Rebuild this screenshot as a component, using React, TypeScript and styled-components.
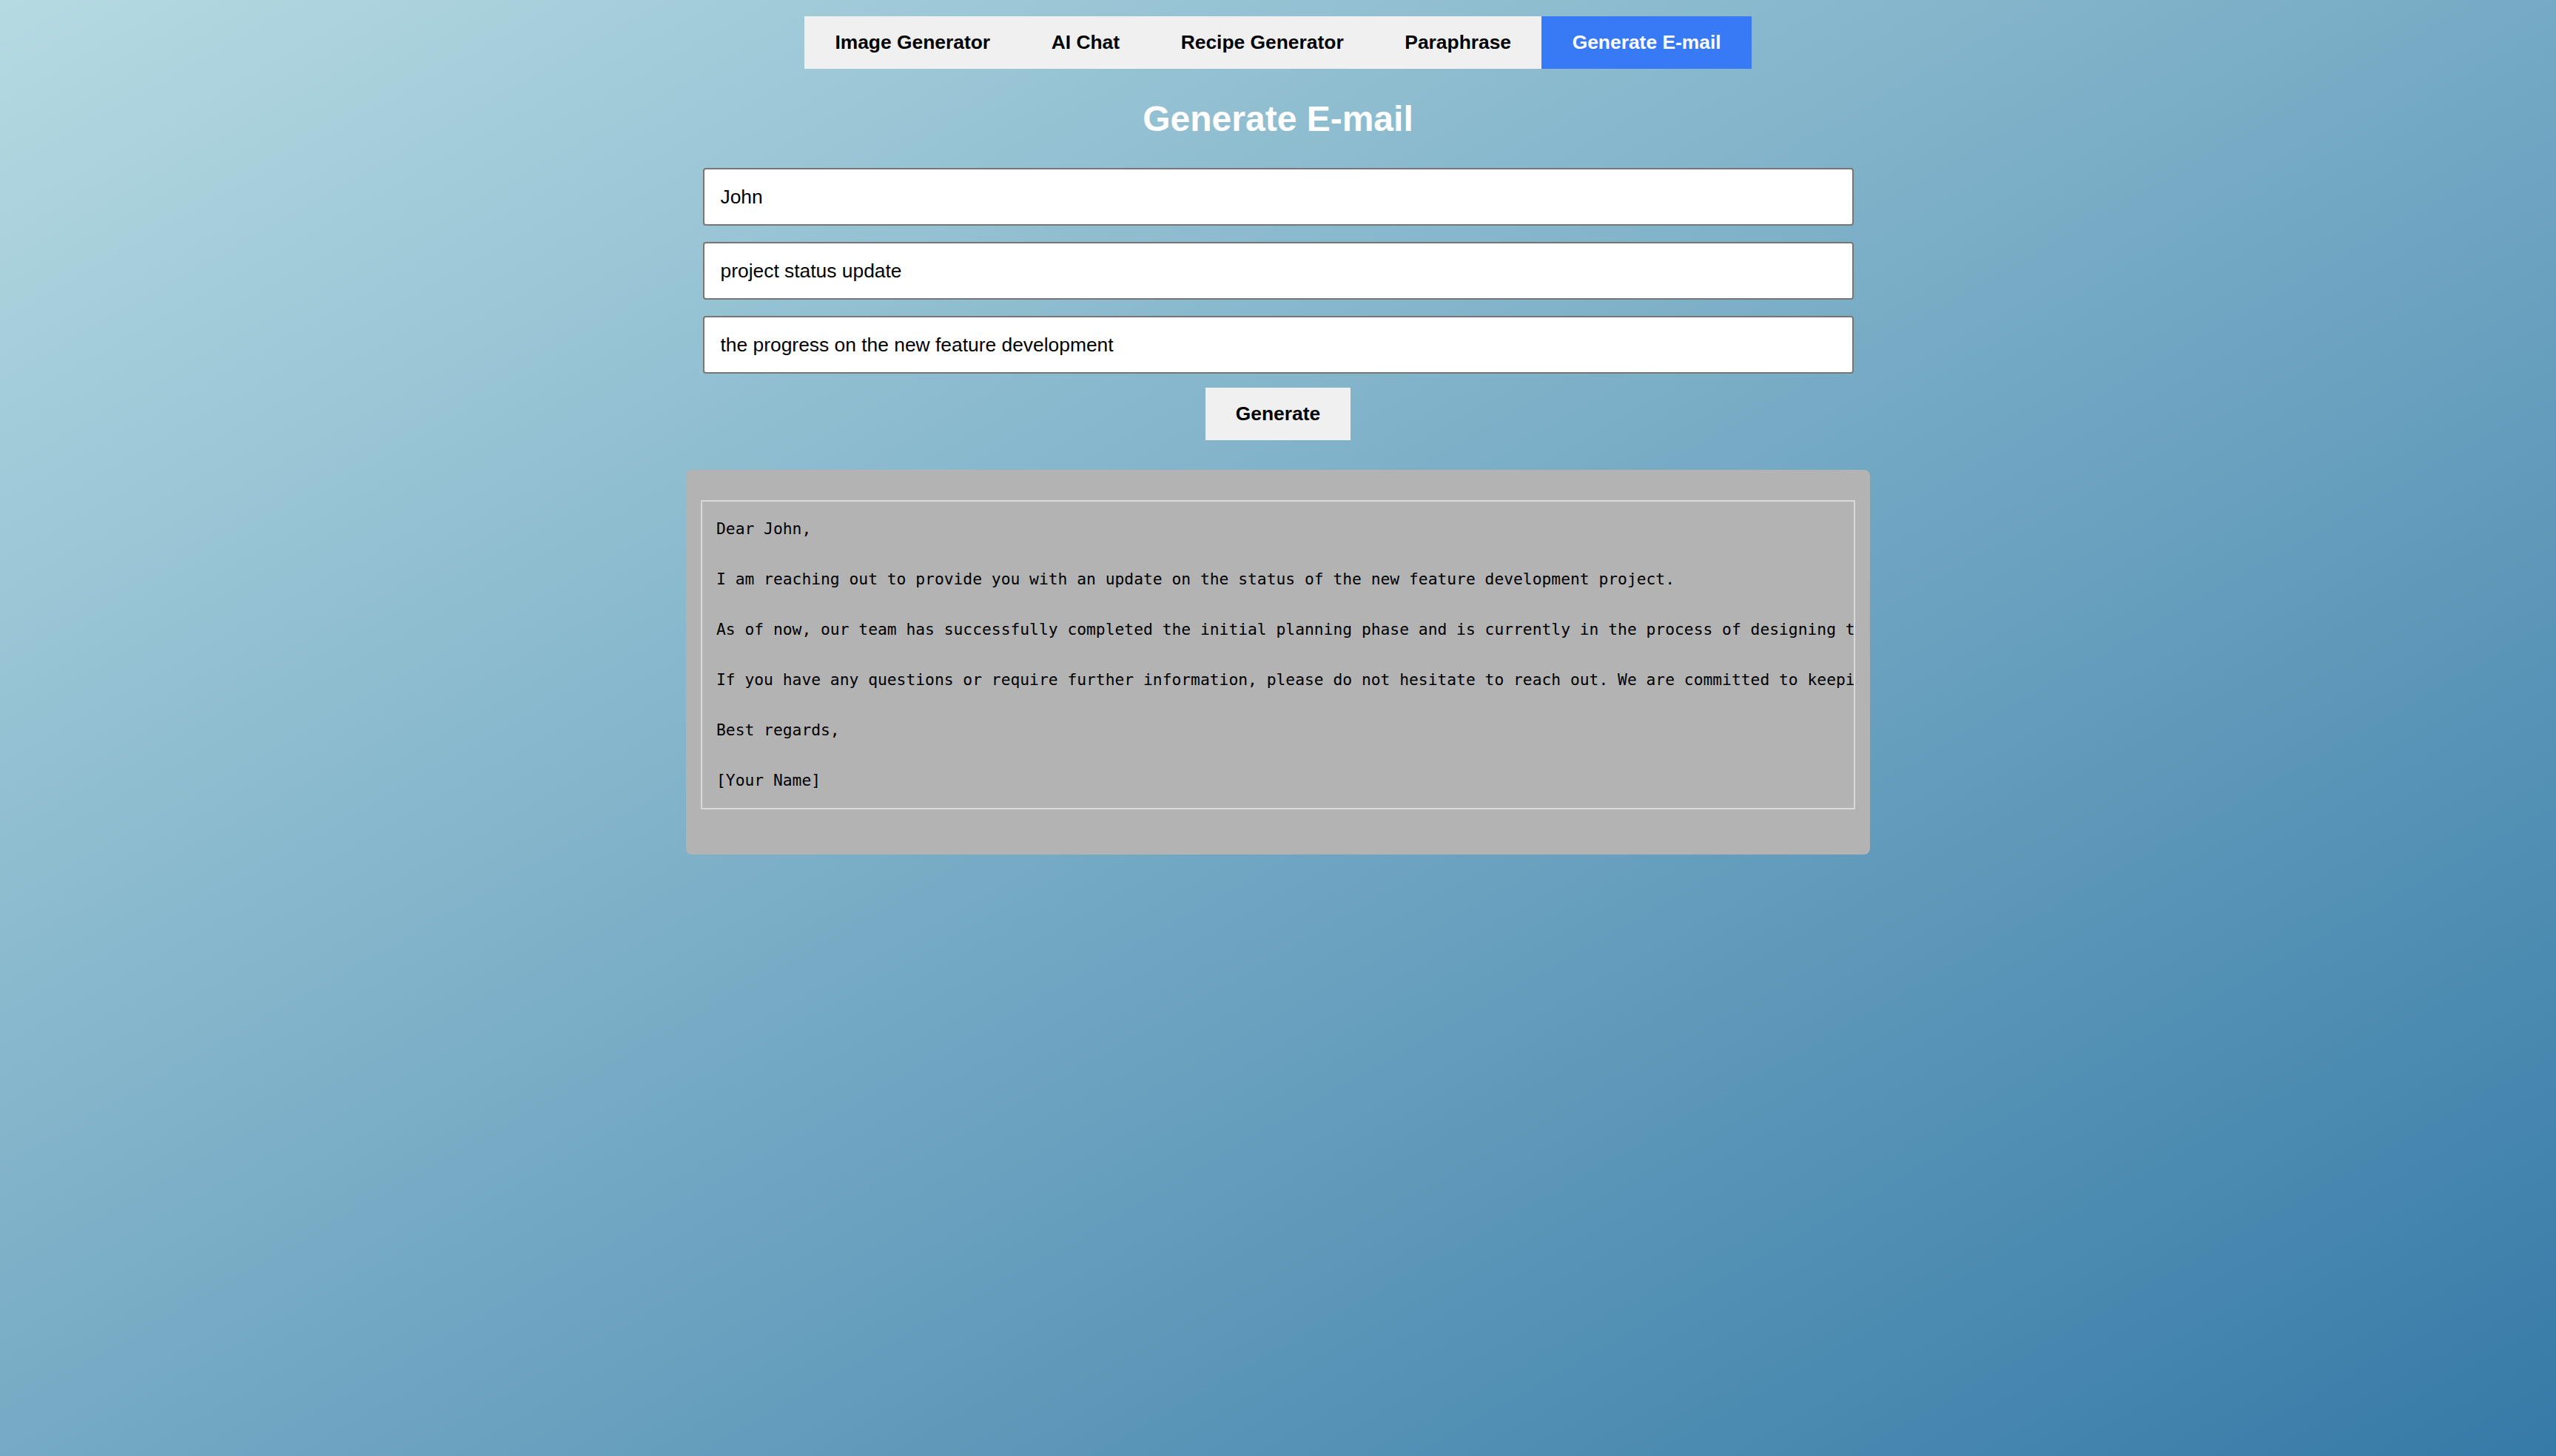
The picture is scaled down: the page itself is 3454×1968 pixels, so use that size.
import React from "react";
import styled, { createGlobalStyle } from "styled-components";

const GlobalStyle = createGlobalStyle`
  html, body {
    margin: 0;
    padding: 0;
  }
  body {
    font-family: "Liberation Sans", Arial, sans-serif;
  }
  * {
    box-sizing: border-box;
  }
`;

const Page = styled.div`
  min-height: 100vh;
  display: flex;
  flex-direction: column;
  align-items: center;
  padding-top: 22px;
  background: linear-gradient(to bottom right, #b5dae2, #367aa7);
`;

const Nav = styled.nav`
  display: flex;
  background: #f0f0f0;
`;

const NavItem = styled.button<{ $active?: boolean }>`
  height: 71px;
  padding: 0 41.3px;
  border: none;
  margin: 0;
  display: flex;
  align-items: center;
  font-family: "Liberation Sans", Arial, sans-serif;
  font-size: 26.4px;
  font-weight: 700;
  color: ${(p) => (p.$active ? "#ffffff" : "#000000")};
  background: ${(p) => (p.$active ? "#387af6" : "#f0f0f0")};
  cursor: pointer;
`;

const Title = styled.h1`
  margin: 40px 0 39px;
  font-size: 48px;
  line-height: 55px;
  font-weight: 700;
  color: #ffffff;
  text-align: center;
`;

const Form = styled.div`
  width: 1555px;
  display: flex;
  flex-direction: column;
  gap: 22px;
`;

const TextInput = styled.input`
  width: 100%;
  height: 78px;
  padding: 0 22px;
  border: 2px solid #767676;
  border-radius: 4px;
  background: #ffffff;
  font-family: "Liberation Sans", Arial, sans-serif;
  font-size: 26.4px;
  color: #000000;
  outline: none;
`;

const GenerateButton = styled.button`
  margin-top: 19px;
  height: 71px;
  padding: 0 41px;
  border: none;
  background: #f0f0f0;
  font-family: "Liberation Sans", Arial, sans-serif;
  font-size: 26.4px;
  font-weight: 700;
  color: #000000;
  cursor: pointer;
`;

const OutputCard = styled.section`
  margin-top: 40px;
  width: 1600px;
  padding: 41px 20px 61px;
  background: #b3b3b3;
  border-radius: 8px;
`;

const EmailText = styled.pre`
  margin: 0;
  padding: 20px 19px;
  border: 2px solid #d9d9d9;
  overflow: hidden;
  white-space: pre;
  font-family: "DejaVu Sans Mono", monospace;
  font-size: 21.3px;
  line-height: 34px;
  color: #000000;
`;

const tabs = ["Image Generator", "AI Chat", "Recipe Generator", "Paraphrase", "Generate E-mail"];

const email = `Dear John,

I am reaching out to provide you with an update on the status of the new feature development project.

As of now, our team has successfully completed the initial planning phase and is currently in the process of designing the user interface and implementing the core functionality. We anticipate completing the development phase by the end of next month.

If you have any questions or require further information, please do not hesitate to reach out. We are committed to keeping you informed throughout the development process.

Best regards,

[Your Name]`;

export default function App() {
  return (
    <>
      <GlobalStyle />
      <Page>
        <Nav>
          {tabs.map((t) => (
            <NavItem key={t} $active={t === "Generate E-mail"}>
              {t}
            </NavItem>
          ))}
        </Nav>
        <Title>Generate E-mail</Title>
        <Form>
          <TextInput defaultValue="John" />
          <TextInput defaultValue="project status update" />
          <TextInput defaultValue="the progress on the new feature development" />
        </Form>
        <GenerateButton>Generate</GenerateButton>
        <OutputCard>
          <EmailText>{email}</EmailText>
        </OutputCard>
      </Page>
    </>
  );
}
